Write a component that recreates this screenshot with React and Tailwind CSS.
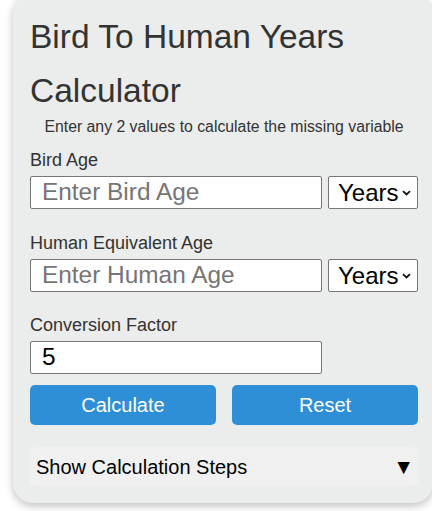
import React, { useState } from 'react';

const Chevron = () => (
    <svg
        className="pointer-events-none absolute right-[7px] top-1/2 -translate-y-1/2"
        width="9"
        height="6"
        viewBox="0 0 9 6"
        fill="none"
    >
        <path d="M1 1.2L4.5 4.5L8 1.2" stroke="#111" strokeWidth="1.8" />
    </svg>
);

const UnitSelect = () => (
    <div className="relative flex-1">
        <select className="h-[33px] w-full appearance-none rounded-[2px] border border-[#767676] bg-white pl-[9px] text-[24px] leading-none text-black outline-none">
            <option>Years</option>
            <option>Months</option>
        </select>
        <Chevron />
    </div>
);

const Field = ({ label, placeholder, value, onChange, withUnit, className }) => (
    <div className={className}>
        <label className="block text-[18px] leading-[18px] text-[#333]">{label}</label>
        <div className="mt-[7px] flex gap-[6px]">
            <input
                type="number"
                placeholder={placeholder}
                value={value}
                onChange={(e) => onChange(e.target.value)}
                className="h-[33px] w-[292px] rounded-[2px] border border-[#767676] bg-white pl-[11px] text-[24.4px] text-black outline-none placeholder:text-[#757575]"
            />
            {withUnit && <UnitSelect />}
        </div>
    </div>
);

export default function App() {
    const [birdAge, setBirdAge] = useState('');
    const [humanAge, setHumanAge] = useState('');
    const [factor, setFactor] = useState('5');

    return (
        <div className="min-h-[511px] overflow-hidden bg-white font-['Liberation_Sans',Arial,sans-serif]">
            <div className="ml-[13px] -mt-[6px] w-[420px] rounded-[20px] bg-[#ebecec] pl-[17px] pr-[15px] pt-[16px] pb-[17px] shadow-[0_3px_8px_rgba(0,0,0,0.25)]">
                <h1 className="text-[33.5px] leading-[54px] text-[#333]">Bird To Human Years Calculator</h1>
                <p className="mt-[1px] text-center text-[15.8px] leading-[16px] text-[#333]">
                    Enter any 2 values to calculate the missing variable
                </p>

                <Field
                    className="mt-[16px]"
                    label="Bird Age"
                    placeholder="Enter Bird Age"
                    value={birdAge}
                    onChange={setBirdAge}
                    withUnit
                />
                <Field
                    className="mt-[25px]"
                    label="Human Equivalent Age"
                    placeholder="Enter Human Age"
                    value={humanAge}
                    onChange={setHumanAge}
                    withUnit
                />
                <Field
                    className="mt-[24px]"
                    label="Conversion Factor"
                    value={factor}
                    onChange={setFactor}
                />

                <div className="mt-[11px] grid grid-cols-2 gap-[16px]">
                    <button className="h-[40px] rounded-[5px] bg-[#2e8fd6] text-[20px] text-white">Calculate</button>
                    <button
                        className="h-[40px] rounded-[5px] bg-[#2e8fd6] text-[20px] text-white"
                        onClick={() => { setBirdAge(''); setHumanAge(''); setFactor('5'); }}
                    >
                        Reset
                    </button>
                </div>

                <div className="mt-[22px] flex h-[39px] items-center justify-between rounded-[6px] bg-[#f0f0f0] pl-[6px] pr-[4px] text-[20px] text-black">
                    <span>Show Calculation Steps</span>
                    <span className="text-[21px]">▼</span>
                </div>
            </div>
        </div>
    );
}
